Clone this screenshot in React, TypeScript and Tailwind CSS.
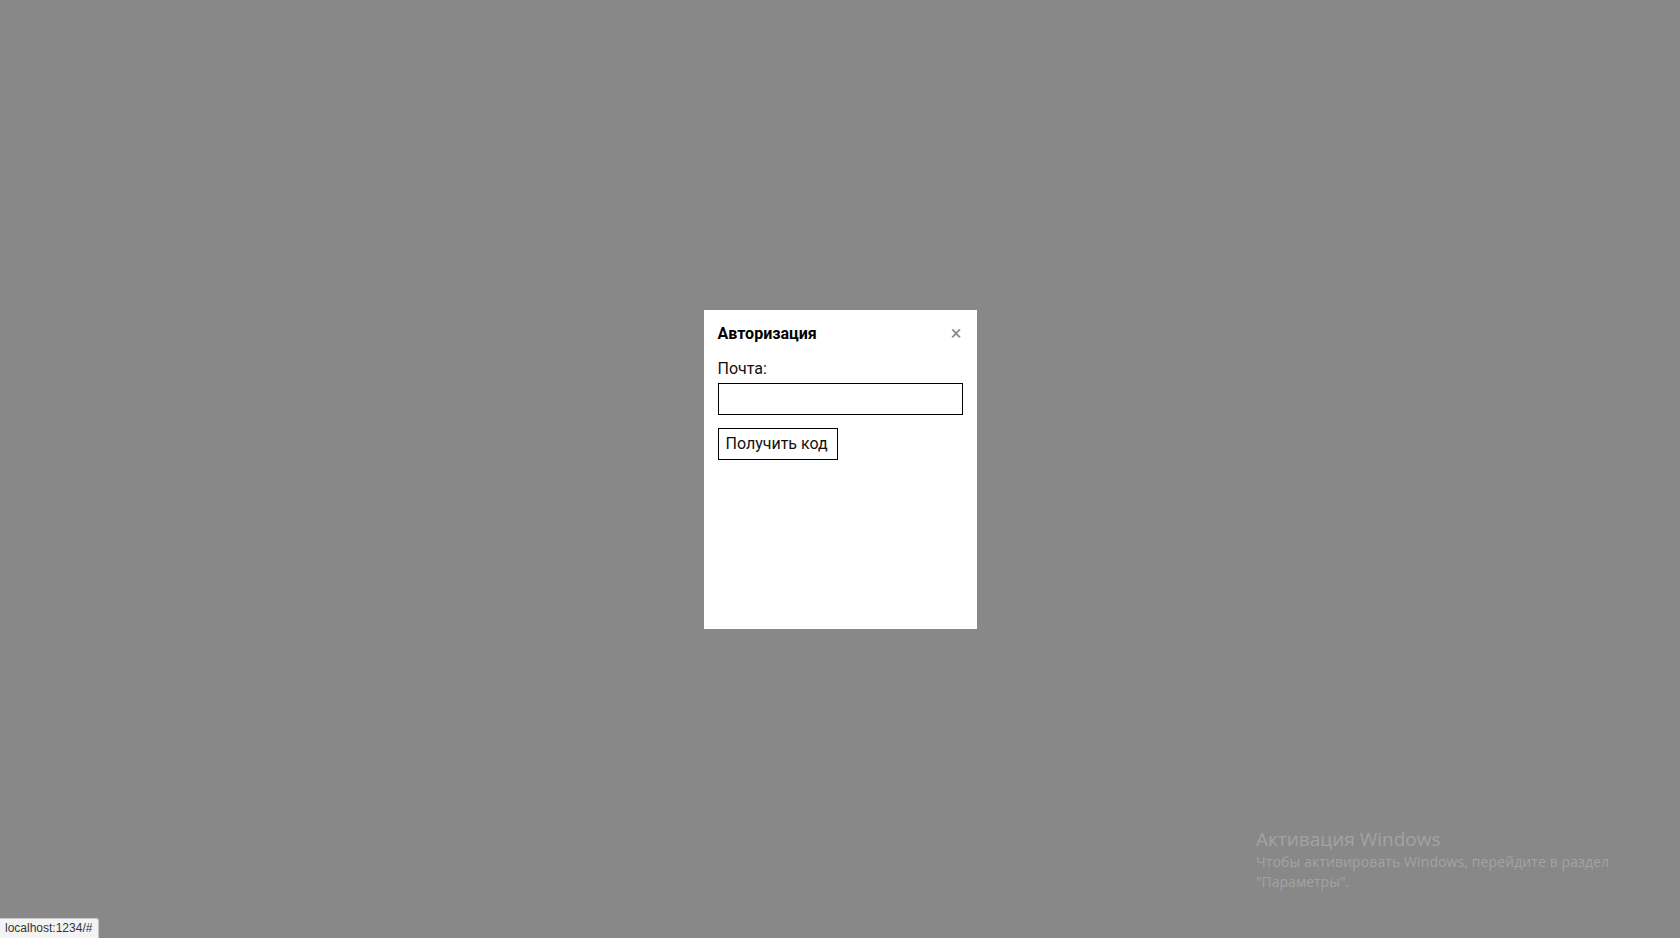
import React from 'react';

const App: React.FC = () => {
  return (
    <div className="relative w-full h-[938px] bg-[#888888] overflow-hidden font-['Roboto',sans-serif]">
      {/* Modal */}
      <div className="flex h-full items-center justify-center">
        <div className="w-[273px] h-[319px] bg-white px-[14px] pt-[14px]">
          <div className="flex items-start justify-between">
            <h2 className="text-[16px] leading-[19px] font-bold text-black">Авторизация</h2>
            <button className="text-[#8a8a8a] text-[20px] leading-[19px] pr-[1px]">×</button>
          </div>
          <label className="block mt-[16px] text-[16px] leading-[19px] text-[#111]">Почта:</label>
          <input
            type="text"
            className="block mt-[5px] w-[245px] h-[32px] border border-black outline-none px-1"
          />
          <button className="mt-[13px] h-[32px] w-[120px] border border-black bg-white text-[16px] leading-[19px] text-[#111] whitespace-nowrap text-left pl-[7px]">
            Получить код
          </button>
        </div>
      </div>

      {/* Windows watermark */}
      <div className="absolute left-[1256px] top-[826px] text-[#a3a3a3] font-['Open_Sans',sans-serif]">
        <div className="text-[19px] leading-[26px]">Активация Windows</div>
        <div className="text-[14px] leading-[20px] tracking-[0.1px]">Чтобы активировать Windows, перейдите в раздел</div>
        <div className="text-[14px] leading-[20px]">"Параметры".</div>
      </div>

      {/* Status bar */}
      <div className="absolute left-0 bottom-0 h-[20px] w-[99px] bg-[#f3f3f3] border border-[#c8c8c8] border-l-0 border-b-0 rounded-tr-[3px] text-[12px] leading-[19px] text-[#333] pl-[5px] whitespace-nowrap font-['Liberation_Sans',sans-serif]">
        localhost:1234/#
      </div>
    </div>
  );
};

export default App;
